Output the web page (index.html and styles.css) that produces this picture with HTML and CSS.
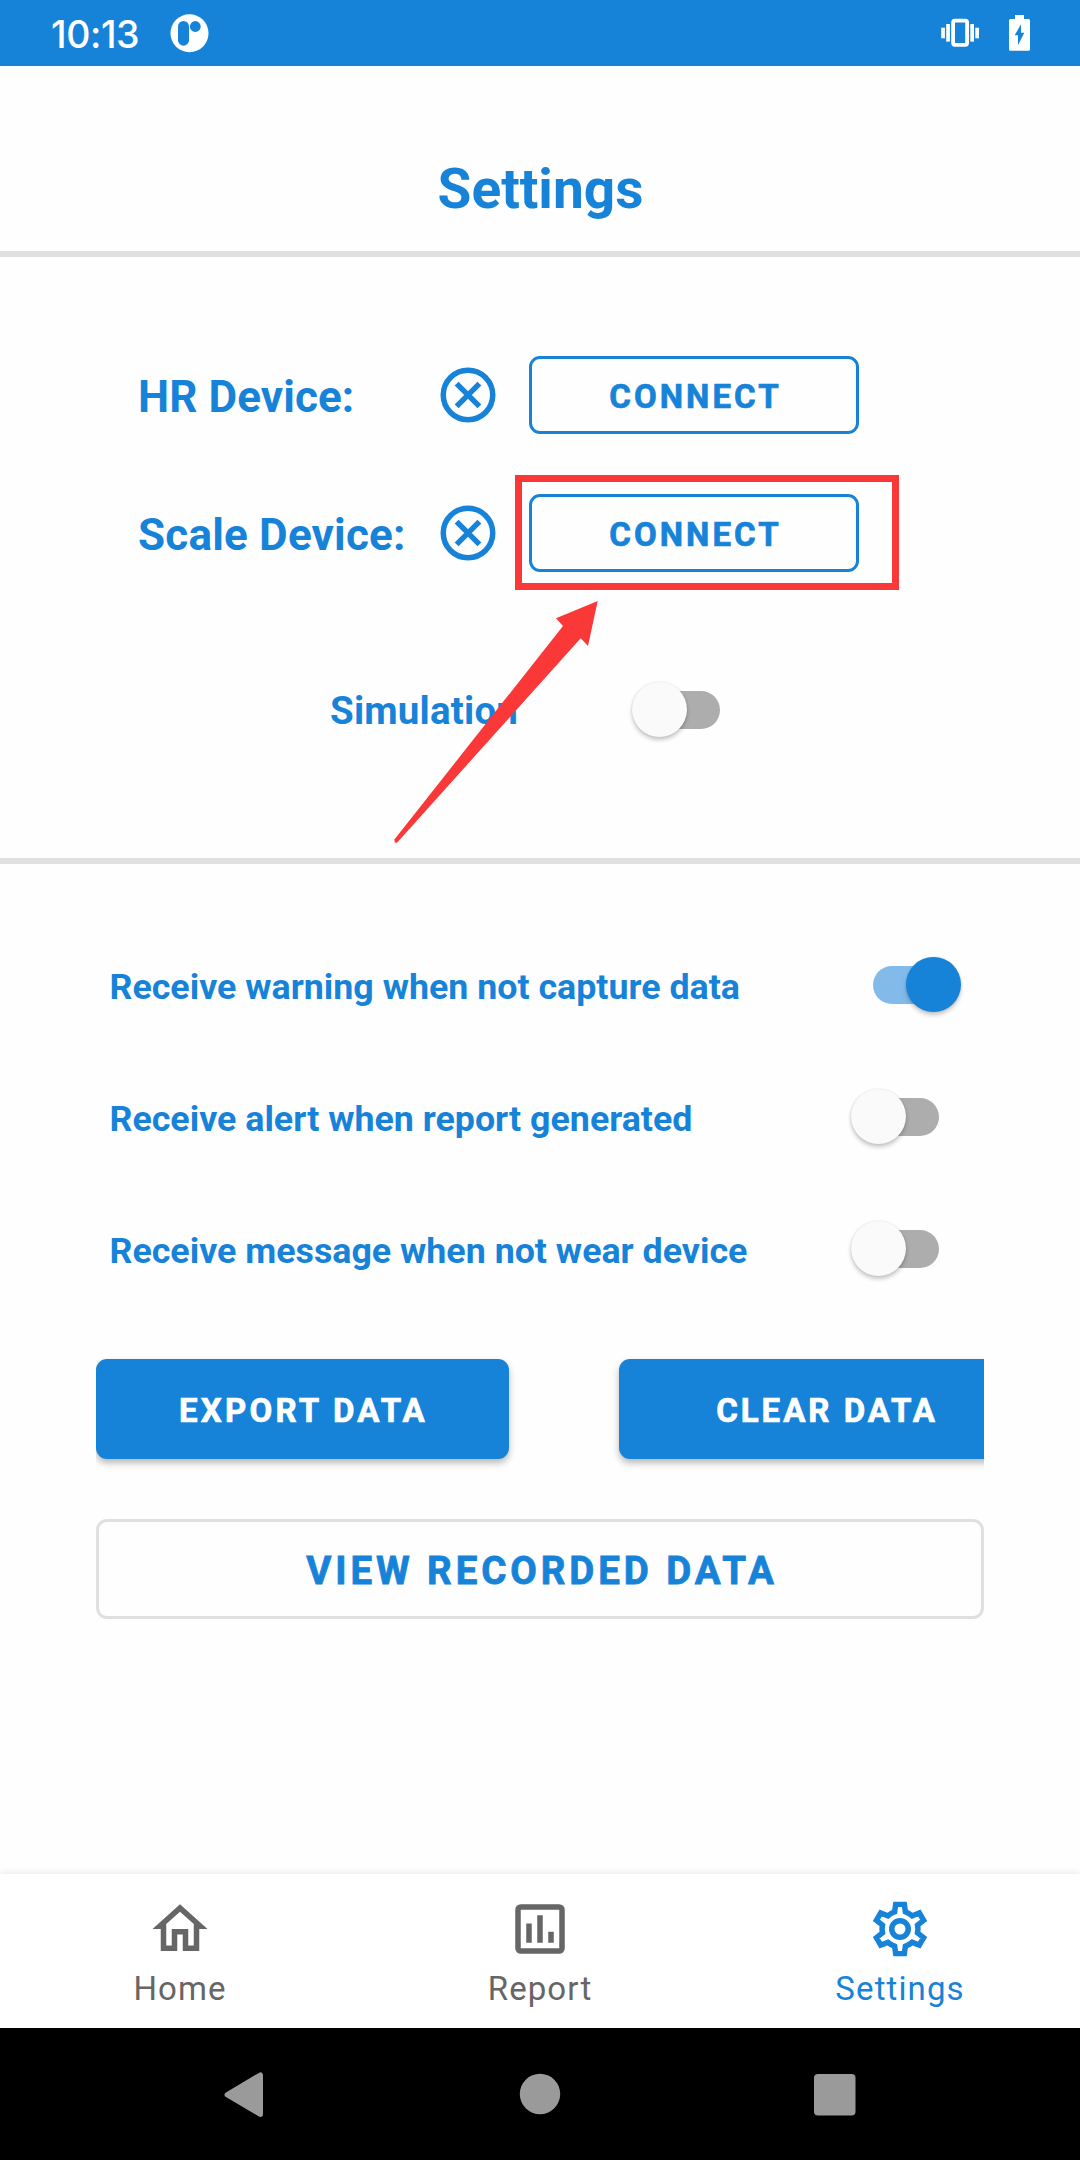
FILE: index.html
```html
<!DOCTYPE html>
<html lang="en">
<head>
<meta charset="utf-8">
<title>Settings</title>
<link rel="stylesheet" href="styles.css">
</head>
<body>
<div class="screen">
  <div class="status-bar">
    <span class="clock">10:13</span>
    <svg class="app-badge" viewBox="0 0 40 40"><circle cx="19.5" cy="19.3" r="19" fill="#fff"/><rect x="8" y="7" width="11" height="24.7" rx="5.5" fill="#1683d9"/><circle cx="25.3" cy="12.5" r="5.4" fill="#1683d9"/></svg>
    <svg class="vibrate" viewBox="0 0 40 40"><g fill="#fff"><rect x="1.2" y="14.7" width="3.7" height="10.6"/><rect x="6.2" y="11" width="3.7" height="17.6"/><rect x="30.3" y="11" width="3.7" height="17.6"/><rect x="35.3" y="14.7" width="3.7" height="10.6"/></g><rect x="13.1" y="7.6" width="14" height="24.2" rx="1.8" fill="none" stroke="#fff" stroke-width="3.8"/></svg>
    <svg class="battery" viewBox="0 0 21 36"><path fill="#fff" d="M6 0h9v4h4.500q1.500 0 1.500 1.500v28.700q0 1.500-1.500 1.500h-18q-1.500 0-1.500-1.500V5.500Q0 4 1.500 4H6z"/><path fill="#1683d9" d="M12 9.300L5.700 20.300H9v10l6.300-12.600H12z"/></svg>
  </div>

  <header class="header"><h1 class="title">Settings</h1></header>

  <section class="devices">
    <div class="device-row">
      <span class="device-name hr">HR Device:</span>
      <svg class="state" viewBox="0 0 24 24"><circle cx="12" cy="12" r="9"/><path d="M7.850 7.850l8.300 8.300M16.150 7.850l-8.300 8.300"/></svg>
      <button class="outline-btn">CONNECT</button>
    </div>
    <div class="device-row">
      <span class="device-name">Scale Device:</span>
      <svg class="state" viewBox="0 0 24 24"><circle cx="12" cy="12" r="9"/><path d="M7.850 7.850l8.300 8.300M16.150 7.850l-8.300 8.300"/></svg>
      <button class="outline-btn">CONNECT</button>
    </div>
    <div class="simulation-row">
      <span class="simulation-name">Simulation</span>
      <span class="switch"><span class="thumb"></span></span>
    </div>
  </section>

  <section class="options">
    <div class="option"><span class="option-name">Receive warning when not capture data</span><span class="switch on"><span class="thumb"></span></span></div>
    <div class="option"><span class="option-name">Receive alert when report generated</span><span class="switch"><span class="thumb"></span></span></div>
    <div class="option"><span class="option-name">Receive message when not wear device</span><span class="switch"><span class="thumb"></span></span></div>
  </section>

  <div class="actions">
    <button class="solid-btn export">EXPORT DATA</button>
    <button class="solid-btn">CLEAR DATA</button>
  </div>
  <button class="view-btn">VIEW RECORDED DATA</button>

  <nav class="tabs">
    <a class="tab"><svg class="tab-icon" viewBox="0 0 24 24"><path fill="currentColor" d="M12 5.690l5 4.500V18h-2v-6H9v6H7v-7.810l5-4.500M12 3L2 12h3v8h6v-6h2v6h6v-8h3L12 3z"/></svg><span class="tab-label">Home</span></a>
    <a class="tab"><svg class="tab-icon" viewBox="0 0 24 24"><rect x="4" y="4" width="16" height="16" rx="1" fill="none" stroke="currentColor" stroke-width="2"/><path fill="currentColor" d="M7 10h2v7H7zM11 7h2v10h-2zM15 13h2v4h-2z"/></svg><span class="tab-label">Report</span></a>
    <a class="tab active"><svg class="tab-icon" viewBox="0 0 24 24"><defs><clipPath id="gear"><path d="M19.440 12.990Q19.580 12 19.440 11.030L21.890 9.110 19.460 4.890 16.590 6.050Q15.800 5.450 14.880 5.060L14.440 2H9.570L9.130 5.070Q8.200 5.450 7.440 6.060L4.560 4.890 2.120 9.110 4.560 11.030Q4.420 12 4.560 12.990L2.130 14.920 4.560 19.120 7.440 17.970Q8.200 18.550 9.130 18.930L9.580 22H14.430L14.870 18.930Q15.800 18.550 16.570 17.960L19.450 19.110 21.880 14.910Z"/></clipPath></defs><path clip-path="url(#gear)" fill="none" stroke="currentColor" stroke-width="4" d="M19.440 12.990Q19.580 12 19.440 11.030L21.890 9.110 19.460 4.890 16.590 6.050Q15.800 5.450 14.880 5.060L14.440 2H9.570L9.130 5.070Q8.200 5.450 7.440 6.060L4.560 4.890 2.120 9.110 4.560 11.030Q4.420 12 4.560 12.990L2.130 14.920 4.560 19.120 7.440 17.970Q8.200 18.550 9.130 18.930L9.580 22H14.430L14.870 18.930Q15.800 18.550 16.570 17.960L19.450 19.110 21.880 14.910Z"/><circle cx="12" cy="12" r="3" fill="none" stroke="currentColor" stroke-width="2"/></svg><span class="tab-label">Settings</span></a>
  </nav>

  <div class="system-nav">
    <svg class="sys-icon" viewBox="0 0 66 66"><path d="M20.300 33.700L53.300 14.200V53.200z" fill="#9a9a9a" stroke="#9a9a9a" stroke-width="5.400" stroke-linejoin="round"/></svg>
    <svg class="sys-icon" viewBox="0 0 66 66"><circle cx="33" cy="33" r="20.200" fill="#9a9a9a"/></svg>
    <svg class="sys-icon" viewBox="0 0 66 66"><rect x="12" y="13" width="41.500" height="41.500" rx="4" fill="#9a9a9a"/></svg>
  </div>

  <div class="highlight"></div>
  <svg class="arrow" viewBox="0 0 210 250"><path fill="#fb3838" d="M207.700 1L166 18.300 173 26 4.400 239.500 4.800 242.500 7 242.700 190.700 38.300 198 46z"/></svg>
</div>
</body>
</html>
```
FILE: styles.css
```css
* { box-sizing: border-box; }
body { margin: 0; font-family: Roboto, "Liberation Sans", sans-serif; background: #fefefe; }
.screen { position: relative; width: 1080px; height: 2160px; overflow: hidden; display: flex; flex-direction: column; color: #1683d9; background: #fefefe; }
button { font-family: inherit; margin: 0; padding: 0; }
svg { display: block; flex: none; }

.status-bar { height: 66px; flex: none; display: flex; align-items: flex-start; background: #1683d9; padding-left: 51px; }
.clock { width: 119px; font: 500 37.5px/66px Inter, sans-serif; color: #fff; letter-spacing: -0.4px; padding-top: 1.5px; }
.app-badge { width: 40px; height: 40px; margin-top: 14px; }
.vibrate { width: 40px; height: 40px; margin: 13px 0 0 730px; }
.battery { width: 21px; height: 36px; margin: 15px 0 0 29px; }

.header { height: 191px; flex: none; padding-top: 61px; border-bottom: 6px solid #e0e0e0; }
.title { margin: 0; padding-left: 1px; text-align: center; font-size: 55px; line-height: 124px; font-weight: 700; }

.devices { height: 607px; flex: none; border-bottom: 6px solid #e0e0e0; padding: 99px 0 0 138px; }
.device-row { display: flex; align-items: center; height: 78px; margin-bottom: 60px; }
.device-name { width: 297px; padding-top: 4px; font-size: 44px; font-weight: 700; letter-spacing: 0.2px; }
.device-name.hr { letter-spacing: 0.1px; }
.state { width: 66px; height: 66px; margin-right: 28px; fill: none; stroke: currentColor; stroke-width: 2; }
.outline-btn { width: 330px; height: 78px; border: 3px solid #1683d9; border-radius: 11px; background: none; color: #1683d9; font-size: 33px; font-weight: 700; letter-spacing: 3.05px; padding: 3px 0 0 3px; -webkit-text-stroke: 0.7px currentColor; }
.simulation-row { display: flex; align-items: center; height: 56px; margin-top: 109px; padding-left: 192px; }
.simulation-name { width: 301.5px; padding-top: 3px; font-size: 38.5px; font-weight: 700; letter-spacing: 0.2px; }

.switch { flex: none; display: flex; align-items: center; width: 88px; height: 55px; position: relative; }
.switch::before { content: ""; position: absolute; top: 9px; right: 0; width: 80px; height: 38px; border-radius: 19px; background: #adadad; }
.thumb { position: relative; width: 55px; height: 55px; border-radius: 50%; background: #fafafa; box-shadow: 0 3px 4px rgba(0, 0, 0, 0.22), 0 0 2px rgba(0, 0, 0, 0.12); }
.switch.on { justify-content: flex-end; }
.switch.on::before { right: auto; left: 0; background: #82bbea; }
.switch.on .thumb { background: #1683d9; }

.options { flex: none; padding: 54px 141px 0 109.500px; }
.option { display: flex; align-items: center; justify-content: space-between; height: 132px; }
.option .switch.on { margin-right: -22px; }
.option-name { padding-top: 6px; font-size: 35.75px; font-weight: 700; letter-spacing: 0.01px; white-space: nowrap; }

.actions { flex: none; display: flex; gap: 110px; height: 120px; margin: 41px 96px 0; padding-top: 4px; overflow: hidden; }
.solid-btn { flex: none; width: 413px; height: 100px; border: 0; border-radius: 11px; background: #1683d9; color: #fff; font-size: 33px; font-weight: 700; letter-spacing: 3px; padding: 2px 0 0 3px; box-shadow: 0 4px 7px rgba(0, 0, 0, 0.28); -webkit-text-stroke: 0.7px currentColor; }
.solid-btn.export { letter-spacing: 3.2px; padding-left: 2px; }
.view-btn { flex: none; width: 888px; height: 100px; margin: 44px 96px 0; border: 3px solid #e0e0e0; border-radius: 11px; background: none; color: #1683d9; font-size: 38.5px; font-weight: 700; letter-spacing: 3.9px; padding: 2px 0 0 4px; -webkit-text-stroke: 0.8px currentColor; }

.tabs { flex: none; margin-top: auto; height: 154px; display: flex; background: #fff; box-shadow: 0 -1px 8px rgba(0, 0, 0, 0.09); }
.tab { flex: 1; display: flex; flex-direction: column; align-items: center; padding-top: 22px; color: #666; }
.tab.active { color: #1683d9; }
.tab-icon { width: 66px; height: 66px; }
.tab-label { font-size: 33px; line-height: 40px; margin-top: 7px; letter-spacing: 1.1px; }
.system-nav { flex: none; height: 132px; display: grid; grid-template-columns: 300px 295px 66px; align-items: center; background: #000; padding-left: 207px; }
.sys-icon { width: 66px; height: 66px; }

.highlight { position: absolute; left: 515px; top: 475px; width: 384px; height: 115px; border: 7px solid #fb3838; }
.arrow { position: absolute; left: 390px; top: 600px; width: 210px; height: 250px; }
```
